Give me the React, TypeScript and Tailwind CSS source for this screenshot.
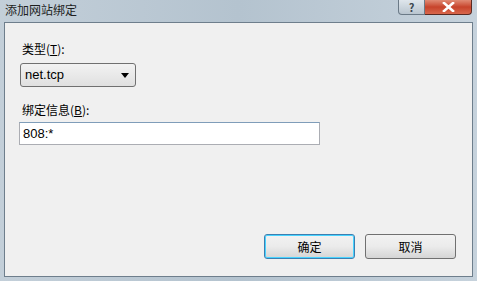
export default function App() {
  return (
    <div
      className="w-[477px] h-[281px] flex flex-col bg-gradient-to-r from-[#c3cfd9] via-[#b4c3cf] to-[#c6d2dc] overflow-hidden"
      style={{ fontFamily: '"Microsoft YaHei", "Noto Sans CJK SC", "Liberation Sans", sans-serif' }}
    >
      {/* title bar */}
      <div className="h-[22px] flex items-start justify-between shrink-0">
        <div className="pl-[5px] pt-[1px] text-[12px] leading-[18px] text-[#1e1e1e]">添加网站绑定</div>
        <div className="flex mr-[5px]">
          <div className="w-[27px] h-[15px] rounded-bl-[4px] border border-t-0 border-[#6b7a87] bg-gradient-to-b from-[#dfe6ec] to-[#b9c5cf] flex items-center justify-center text-[11px] leading-none text-[#3b4650] font-bold">
            ?
          </div>
          <div className="w-[47px] h-[15px] rounded-br-[4px] border border-t-0 border-l-0 border-[#5a2a22] bg-gradient-to-b from-[#e08a74] via-[#c7432b] to-[#d8674c] flex items-center justify-center">
            <svg width="13" height="10" viewBox="0 0 13 10">
              <path d="M2 1 L11 9 M11 1 L2 9" stroke="#ffffff" strokeWidth="2.6" strokeLinecap="square" />
            </svg>
          </div>
        </div>
      </div>
      {/* client area */}
      <div className="mx-[4px] mb-[4px] flex-1 border border-[#6e7e8c] bg-[#f0f0f0] text-[12px] text-black flex flex-col">
        <div className="pl-[17px] pt-[18px] flex flex-col">
          <div className="leading-[16px]">
            类型(<span className="underline">T</span>):
          </div>
          <div className="mt-[6px] w-[116px] h-[24px] rounded-[3px] border border-[#707070] bg-gradient-to-b from-[#f2f2f2] to-[#e0e0e0] flex items-center justify-between pl-[4px] pr-[6px] -ml-[2px]">
            <span className="text-[13px]" style={{ fontFamily: '"Liberation Sans", sans-serif' }}>net.tcp</span>
            <svg width="8" height="5" viewBox="0 0 8 5">
              <path d="M0 0 L8 0 L4 5 Z" fill="#000" />
            </svg>
          </div>
          <div className="mt-[15px] leading-[16px]">
            绑定信息(<span className="underline">B</span>):
          </div>
          <div className="mt-[4px] -ml-[3px] w-[301px] h-[23px] border border-[#abadb3] border-t-[#7f9db9] bg-white flex items-center pl-[3px]">
            <span className="text-[13px]" style={{ fontFamily: '"Liberation Sans", sans-serif' }}>808:*</span>
          </div>
        </div>
        <div className="flex-1" />
        <div className="flex justify-end gap-[10px] pr-[16px] pb-[17px]">
          <div className="w-[91px] h-[25px] rounded-[3px] border border-[#3c7fb1] shadow-[inset_0_0_0_1px_#48d3ff] bg-gradient-to-b from-[#f2f2f2] via-[#ebebeb] to-[#d5d5d5] flex items-center justify-center">
            确定
          </div>
          <div className="w-[91px] h-[25px] rounded-[3px] border border-[#707070] bg-gradient-to-b from-[#f2f2f2] via-[#ebebeb] to-[#d5d5d5] flex items-center justify-center">
            取消
          </div>
        </div>
      </div>
    </div>
  );
}
